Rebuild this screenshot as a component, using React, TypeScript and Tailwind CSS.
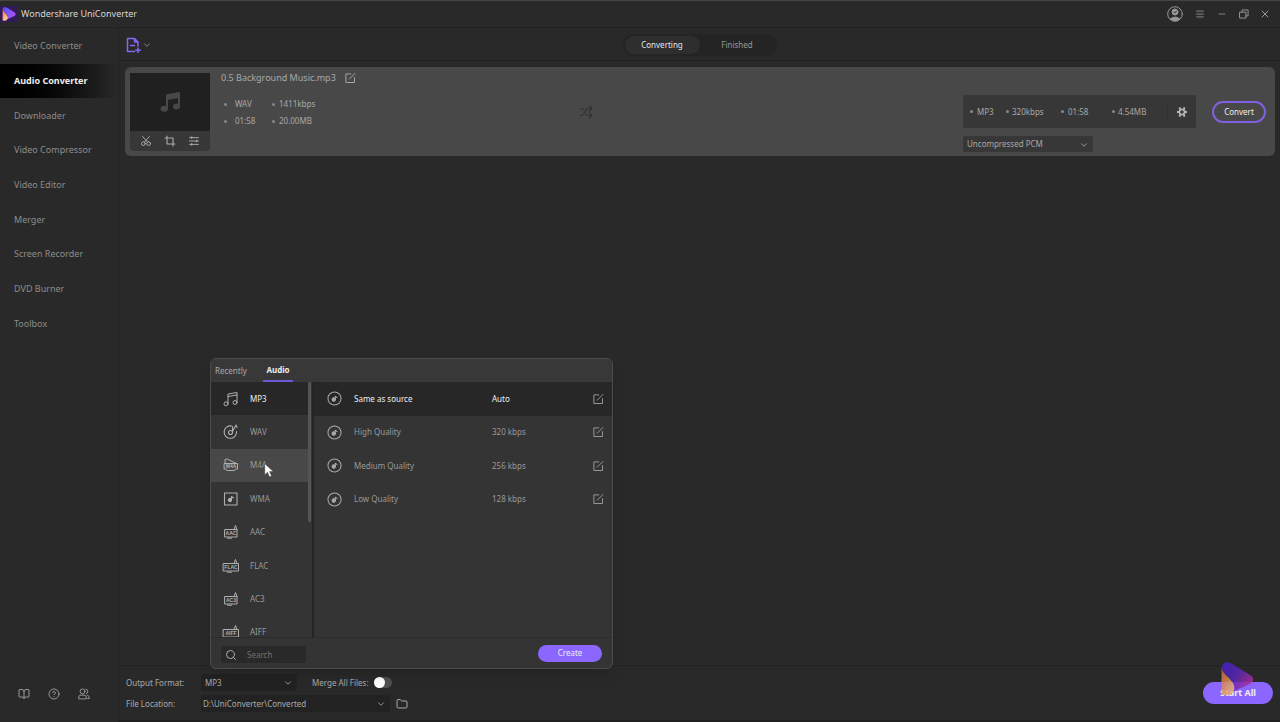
import type { ReactNode, SVGProps } from 'react';
import { BookOpen, ChevronDown, CircleHelp, Folder, Menu, Minus, Search, Shuffle, X } from 'lucide-react';

const NAV = [
  'Video Converter',
  'Audio Converter',
  'Downloader',
  'Video Compressor',
  'Video Editor',
  'Merger',
  'Screen Recorder',
  'DVD Burner',
  'Toolbox',
];

const FORMATS = ['MP3', 'WAV', 'M4A', 'WMA', 'AAC', 'FLAC', 'AC3', 'AIFF'];

const QUALITIES = [
  { name: 'Same as source', rate: 'Auto' },
  { name: 'High Quality', rate: '320 kbps' },
  { name: 'Medium Quality', rate: '256 kbps' },
  { name: 'Low Quality', rate: '128 kbps' },
];

function Svg({ children, ...props }: SVGProps<SVGSVGElement>) {
  return (
    <svg viewBox="0 0 16 16" fill="none" stroke="currentColor" strokeLinecap="round" strokeLinejoin="round" {...props}>
      {children}
    </svg>
  );
}

function Logo({ id, bright, className }: { id: string; bright?: boolean; className: string }) {
  return (
    <svg viewBox="0 0 32 34" className={className}>
      <defs>
        <linearGradient id={`${id}-a`} x1="0" y1="0" x2="1" y2="0.6">
          <stop offset="0" stopColor={bright ? '#5a48f0' : '#4520c8'} />
          <stop offset="0.5" stopColor={bright ? '#7a58ff' : '#5426b8'} />
          <stop offset="1" stopColor={bright ? '#b050f0' : '#a8309c'} />
        </linearGradient>
        <linearGradient id={`${id}-b`} x1="0" y1="0" x2="0.6" y2="1">
          <stop offset="0" stopColor={bright ? '#f07050' : '#c8603c'} />
          <stop offset="1" stopColor={bright ? '#ffd090' : '#e8b070'} />
        </linearGradient>
      </defs>
      <path d="M1 5C1 1 4 0 7 0.500Q9 0.500 12 2.500L29 13C33 15 33 20 29 22L13 29C15 22 10 17 5 13C2 10 1 8 1 5Z" fill={`url(#${id}-a)`} />
      <path d="M0.500 5C1 10 4 12 7 15C12 20 15 25 12 30C10 34 4 34 0.500 32Z" fill={`url(#${id}-b)`} />
    </svg>
  );
}

function EditIcon() {
  return (
    <Svg className="size-3" strokeWidth={1.3}>
      <path d="M9 2.500H2.500V14H14V7.500M7 9.500L14.500 2" />
    </Svg>
  );
}

function DiscIcon({ className }: { className: string }) {
  return (
    <Svg className={className} strokeWidth={1.1}>
      <circle cx="8" cy="8" r="7" />
      <circle cx="7.200" cy="9" r="1.800" fill="currentColor" />
      <path d="M8.800 8.500V5.500L10.800 7" />
    </Svg>
  );
}

function FormatIcon({ format }: { format: string }) {
  if (format === 'MP3') {
    return (
      <Svg className="size-4" strokeWidth={1}>
        <path d="M5 12.500V3L14 1.500V11M5 5.500L14 4" />
        <circle cx="3" cy="12.800" r="2" />
        <circle cx="12" cy="11.500" r="2" />
      </Svg>
    );
  }
  if (format === 'WAV') {
    return (
      <Svg className="size-4" strokeWidth={1.1}>
        <path d="M8.500 2A6.200 6.200 0 1 0 13.500 7.500M9.500 8V2.500M9.500 7.500L13 1L14 3.500" />
        <circle cx="7.500" cy="8.500" r="2" />
      </Svg>
    );
  }
  if (format === 'WMA') {
    return (
      <Svg className="size-4" strokeWidth={1.1}>
        <rect x="1.500" y="2" width="12.500" height="12" />
        <circle cx="7" cy="9" r="1.600" fill="currentColor" />
        <path d="M8.500 8.500V5.500L10.500 7" />
      </Svg>
    );
  }
  const wide = format.length > 3;
  return (
    <Svg className="size-4 overflow-visible" strokeWidth={1}>
      {format === 'M4A' ? (
        <path d="M2 6.500V2.500L4 2L13.500 6.500M1.500 6.500H14.500V12H12.500L11.500 13.500H4L3 12H1.500Z" />
      ) : (
        <>
          <rect x={wide ? 0.5 : 2} y="5.500" width={wide ? 15 : 12} height="7.500" />
          <path d="M4.500 14.200H8.500M11 5.500L12.500 1.500L14 5.500" />
        </>
      )}
      <text
        x="8"
        y="11.300"
        textAnchor="middle"
        fill="currentColor"
        stroke="none"
        className="font-['Liberation_Sans'] text-[5px] font-bold"
      >
        {format}
      </text>
    </Svg>
  );
}

function Field({ id, label, value, className }: { id: string; label: string; value: string; className: string }) {
  return (
    <div className="relative">
      <select id={id} aria-label={label} defaultValue={value} className={className}>
        <option>{value}</option>
      </select>
      <ChevronDown className="pointer-events-none absolute top-1 right-1 size-2.5" />
    </div>
  );
}

function Info({ children, className }: { children: ReactNode; className?: string }) {
  return (
    <li className={`flex items-center ${className ?? 'gap-1'}`}>
      <span className="size-[3px] shrink-0 rounded-full bg-[#888]" />
      {children}
    </li>
  );
}

function TitleBar() {
  return (
    <header className="flex h-7 shrink-0 items-center border-t border-b border-t-[#444] border-b-[#222] pr-[9px]">
      <span className="grid h-4 w-[17px] place-items-center bg-[#311a58]">
        <Logo id="app" bright className="size-3.5" />
      </span>
      <h1 className="ml-1 grow text-[#d5d5d5]">Wondershare UniConverter</h1>
      <div className="flex items-center text-[#999]">
        <button aria-label="Account" className="mr-3">
          <Svg className="size-4" strokeWidth={1}>
            <circle cx="8" cy="8" r="7.300" />
            <circle cx="8" cy="6" r="3" fill="currentColor" />
            <path d="M3.500 13C5 10.500 11 10.500 12.500 13C10 15 6 15 3.500 13Z" fill="currentColor" />
            <path d="M6.800 6L7.800 7L9.500 5" stroke="#333" />
          </Svg>
        </button>
        <button aria-label="Menu" className="mr-3"><Menu className="size-2.5" /></button>
        <button aria-label="Minimize" className="mr-3"><Minus className="size-2.5" /></button>
        <button aria-label="Restore" className="mr-2.5">
          <Svg className="size-2.5" strokeWidth={1.5}>
            <path d="M1.500 5H11V14.500H1.500ZM5 5V1.500H14.500V11H11" />
          </Svg>
        </button>
        <button aria-label="Close"><X className="size-3" /></button>
      </div>
    </header>
  );
}

function Sidebar() {
  return (
    <aside className="flex w-[119px] shrink-0 flex-col justify-between border-r border-[#222] pt-px">
      <nav className="grid h-[312px] grid-rows-9">
        {NAV.map((item) => (
          <a
            key={item}
            href="#"
            className={
              item === 'Audio Converter'
                ? 'flex items-center bg-linear-to-r from-black to-[#292929] pl-3.5 font-bold text-[#eee]'
                : 'flex items-center pl-3.5 text-[#8c8c8c]'
            }
          >
            {item}
          </a>
        ))}
      </nav>
      <div className="flex gap-[18px] px-[18px] pb-[22px] text-[#999]">
        <button aria-label="Guide"><BookOpen className="size-3" /></button>
        <button aria-label="Help"><CircleHelp className="size-3" /></button>
        <button aria-label="Community">
          <Svg className="size-3" strokeWidth={1.3}>
            <circle cx="6" cy="4.500" r="3.200" />
            <path d="M1 14V12Q1 9.500 4 9.500H8Q11 9.500 11 12V14ZM10.500 1.500Q13.500 2 13 5Q13 7 11 7.500M12.500 9.500Q15.500 10 15 14H13" />
          </Svg>
        </button>
      </div>
    </aside>
  );
}

function Toolbar() {
  return (
    <div className="flex h-[33px] shrink-0 items-center border-b border-[#222] px-[7px] pt-px text-[8px]">
      <div className="flex flex-1">
        <button aria-label="Add files" className="flex items-center text-[#8468f5]">
          <Svg className="size-4" strokeWidth={1.5}>
            <path d="M8.500 14.500H1.500V1.500H8.500L12 5V9M8.500 1.500V5H12M4.500 8.500H8.500M12 11V15.500M9.800 13.300H14.300" />
          </Svg>
          <ChevronDown className="size-2.5 text-[#999]" />
        </button>
      </div>
      <div className="grid h-[22px] w-[154px] grid-cols-2 rounded-full bg-[#242424] p-0.5">
        <button className="rounded-full bg-[#2e2e2e] text-[#e5e5e5]">Converting</button>
        <button className="text-[#999]">Finished</button>
      </div>
      <div className="flex-1" />
    </div>
  );
}

function FileCard() {
  return (
    <article className="mt-[6px] mr-[5px] ml-[6px] flex h-[89px] shrink-0 rounded-md bg-[#484848] px-[5px] pt-[6px] pb-[5px] text-[8px] text-[#a8a8a8]">
      <div className="flex w-20 shrink-0 flex-col overflow-hidden rounded-b-sm bg-[#373737]">
        <div className="grid h-[58px] place-items-center bg-[#202020] text-[#484848]">
          <svg viewBox="0 0 20 20" className="size-5" fill="currentColor">
            <path d="M6 3.500Q6 2.500 7 2.200L19 0Q20 0 20 1V14H18V6L8 8V17H6Z" />
            <ellipse cx="4.300" cy="16.800" rx="3.700" ry="3" />
            <ellipse cx="16.500" cy="14.500" rx="3.500" ry="3" />
          </svg>
        </div>
        <div className="flex grow items-center justify-center gap-3 text-[#aaa]">
          <button aria-label="Trim">
            <Svg className="size-3" strokeWidth={1.3}>
              <circle cx="4.500" cy="11.500" r="2.500" />
              <circle cx="11.500" cy="11.500" r="2.500" />
              <path d="M3.500 2L10 9.500M12.500 2L6 9.500" />
            </Svg>
          </button>
          <button aria-label="Crop">
            <Svg className="size-3" strokeWidth={1.5}>
              <path d="M4 1.500V12H14.500M1.500 4H12V14.500" />
            </Svg>
          </button>
          <button aria-label="Effects">
            <Svg className="size-3" strokeWidth={1.3}>
              <path d="M2 3.500H14M2 8H14M2 12.500H14M5 2.200V4.800M11.500 6.700V9.300M5 11.200V13.800" />
            </Svg>
          </button>
        </div>
      </div>
      <div className="ml-[11px] w-[220px] shrink-0">
        <div className="flex h-2.5 items-center gap-2">
          <h2 className="text-[9px]">0.5 Background Music.mp3</h2>
          <button aria-label="Rename"><EditIcon /></button>
        </div>
        <ul className="mt-[13px] ml-[3px] grid grid-cols-[48px_1fr] gap-y-px">
          <Info className="gap-2">WAV</Info>
          <Info>1411kbps</Info>
          <Info className="gap-2">01:58</Info>
          <Info>20.00MB</Info>
        </ul>
      </div>
      <div className="grid w-[290px] place-items-center text-[#303030]">
        <Shuffle className="size-3.5" />
      </div>
      <div className="mt-[22px] ml-auto w-[249px] shrink-0">
        <div className="flex h-[33px] w-[233px] items-center rounded-xs bg-[#373737] pl-[7px]">
          <ul className="flex">
            <Info className="w-9 gap-1">MP3</Info>
            <Info className="w-[55px] gap-[3px]">320kbps</Info>
            <Info className="w-[51px] gap-1">01:58</Info>
            <Info className="w-[55px] gap-[3px]">4.54MB</Info>
          </ul>
          <button aria-label="Settings" className="flex h-5 grow items-center justify-center border-l border-[#303030] text-[#b5b5b5]">
            <Svg className="size-2.5" strokeWidth={3} strokeLinecap="butt">
              <circle cx="8" cy="8" r="4.200" />
              <path d="M4.500 0.500V4M11.500 0.500V4M4.500 12V15.500M11.500 12V15.500M0 8H4M12 8H16" />
            </Svg>
          </button>
        </div>
        <div className="mt-2 flex">
          <Field id="encoder" label="Encoder" value="Uncompressed PCM" className="h-4 w-[130px] appearance-none rounded-xs bg-[#373737] pl-1" />
        </div>
      </div>
      <button className="mt-7 mr-1 h-[22px] w-[54px] shrink-0 rounded-full border-2 border-[#8060e0] text-[#eee]">Convert</button>
    </article>
  );
}

function FormatMenu() {
  return (
    <section className="absolute bottom-full left-[9px] z-10 mb-[5px] w-[403px] overflow-hidden rounded-md border border-[#4c4c4c] bg-[#343434] text-[#999] shadow-lg">
      <div className="flex h-[23px] bg-[#383838] pl-1">
        <button className="mr-[18px] w-[30px] whitespace-nowrap text-[#aaa]">Recently</button>
        <button className="w-[30px] border-b-2 border-[#6f57d8] font-bold text-[#eee]">Audio</button>
      </div>
      <div className="flex h-64 border-b border-[#2b2b2b]">
        <div className="relative w-[103px] overflow-hidden border-r-2 border-[#242424]">
          <div className="grid h-[267px] w-[97px] grid-rows-8 leading-none">
            {FORMATS.map((format) => (
              <button
                key={format}
                className={
                  format === 'MP3'
                    ? 'flex items-center gap-[11px] bg-[#272727] pl-3 text-[#eee]'
                    : format === 'M4A'
                      ? 'flex items-center gap-[11px] bg-[#484848] pl-3'
                      : 'flex items-center gap-[11px] pl-3'
                }
              >
                <span className="text-[#b0b0b0]"><FormatIcon format={format} /></span>
                {format}
              </button>
            ))}
          </div>
          <span className="absolute top-0 right-px h-[140px] w-[3px] rounded-full bg-[#555]" />
          <svg viewBox="0 0 12 18" className="absolute top-[81px] left-[53px] h-[15px] w-[10px]">
            <path d="M1 1V14L4.200 11L6.500 16.500L9 15.500L6.600 10.200H11Z" fill="#fff" stroke="#444" strokeWidth="0.500" />
          </svg>
        </div>
        <div className="grid h-[134px] grow grid-rows-4">
          {QUALITIES.map((q) => (
            <div
              key={q.name}
              className={
                q.rate === 'Auto'
                  ? 'flex items-center bg-[#272727] pr-2 pl-[13px] text-[#eee]'
                  : 'flex items-center pr-2 pl-[13px]'
              }
            >
              <DiscIcon className="mr-3 size-[15px] text-[#aaa]" />
              <span className="w-[138px]">{q.name}</span>
              <span className="grow">{q.rate}</span>
              <button aria-label={`Edit ${q.name}`} className="text-[#999]"><EditIcon /></button>
            </div>
          ))}
        </div>
      </div>
      <div className="flex h-[30px] items-center justify-between px-[10px]">
        <label className="mt-[3px] flex h-[17px] w-[85px] items-center gap-2.5 rounded-xs bg-[#292929] pl-1">
          <Search className="size-3 shrink-0 text-[#aaa]" />
          <input aria-label="Search formats" placeholder="Search" className="w-12 placeholder:text-[#707070]" />
        </label>
        <button className="h-[17px] w-16 rounded-full bg-[#8b66ff] text-[#eee]">Create</button>
      </div>
    </section>
  );
}

function BottomBar() {
  return (
    <footer className="flex h-[57px] shrink-0 items-center justify-between border-t border-b-2 border-t-[#222] border-b-[#202020] pr-[7px] pl-[7px] text-[8px] text-[#aaa]">
      <div className="grid gap-1">
        <div className="flex items-center">
          <label htmlFor="format" className="w-[75px]">Output Format:</label>
          <div className="relative">
            <Field id="format" label="Output Format" value="MP3" className="h-[17px] w-24 appearance-none rounded-xs bg-[#222] pl-1" />
            <FormatMenu />
          </div>
          <label htmlFor="merge" className="ml-[15px] w-[62px] whitespace-nowrap">Merge All Files:</label>
          <input
            id="merge"
            type="checkbox"
            className="h-[11px] w-[18px] appearance-none rounded-full bg-[#505050] before:block before:size-[11px] before:rounded-full before:bg-white"
          />
        </div>
        <div className="flex items-center">
          <label htmlFor="location" className="w-[75px]">File Location:</label>
          <Field id="location" label="File Location" value="D:\UniConverter\Converted" className="h-[17px] w-[189px] appearance-none rounded-xs bg-[#222] pl-0.5" />
          <button aria-label="Open folder" className="ml-1.5"><Folder className="size-3" /></button>
        </div>
      </div>
      <div className="relative">
        <button className="h-[22px] w-[70px] rounded-full bg-[#8b66ff] text-[9px] font-bold text-[#eee]">Start All</button>
        <Logo id="mark" className="pointer-events-none absolute bottom-2 left-[18px] h-[34px] w-8 opacity-85" />
      </div>
    </footer>
  );
}

export default function App() {
  return (
    <div className="flex h-screen min-w-[900px] flex-col overflow-hidden bg-[#292929] font-['Noto_Sans',sans-serif] text-[9px] leading-4">
      <TitleBar />
      <div className="flex min-h-0 grow">
        <Sidebar />
        <main className="flex min-w-0 grow flex-col">
          <Toolbar />
          <FileCard />
          <div className="grow" />
          <BottomBar />
        </main>
      </div>
    </div>
  );
}
